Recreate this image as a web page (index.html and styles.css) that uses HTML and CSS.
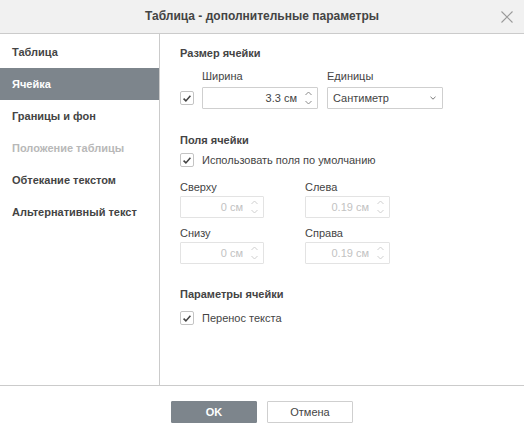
FILE: index.html
```html
<!DOCTYPE html>
<html lang="ru">
<head>
<meta charset="utf-8">
<title>Таблица - дополнительные параметры</title>
<link rel="stylesheet" href="styles.css">
</head>
<body>
<div class="dialog">
  <div class="header">
    <span></span>
    <span class="title">Таблица - дополнительные параметры</span>
    <svg class="close" width="12" height="12" viewBox="0 0 12 12"><path d="M0.5 0.5 L11.5 11.5 M11.5 0.5 L0.5 11.5" stroke="#9a9a9a" stroke-width="1.1" fill="none"/></svg>
  </div>
  <div class="main">
    <nav class="sidebar">
      <div class="nav-item">Таблица</div>
      <div class="nav-item active">Ячейка</div>
      <div class="nav-item">Границы и фон</div>
      <div class="nav-item disabled">Положение таблицы</div>
      <div class="nav-item">Обтекание текстом</div>
      <div class="nav-item">Альтернативный текст</div>
    </nav>
    <div class="content">
      <div class="section-title">Размер ячейки</div>
      <div class="size-row">
        <span class="checkbox"><svg width="13" height="13" viewBox="0 0 13 13"><path d="M2.8 6.6 L5.3 9.1 L10.2 3.6" stroke="#444" stroke-width="1.7" fill="none"/></svg></span>
        <div class="field">
          <div class="label">Ширина</div>
          <div class="spin wide">
            <span class="value">3.3 см</span>
            <span class="arrows">
              <svg width="7" height="5" viewBox="0 0 7 5"><path d="M0.5 4 L3.5 1 L6.5 4" stroke="#8a8a8a" stroke-width="1" fill="none"/></svg>
              <svg width="7" height="5" viewBox="0 0 7 5"><path d="M0.5 1 L3.5 4 L6.5 1" stroke="#8a8a8a" stroke-width="1" fill="none"/></svg>
            </span>
          </div>
        </div>
        <div class="field">
          <div class="label">Единицы</div>
          <div class="select">
            <span>Сантиметр</span>
            <svg width="6" height="4" viewBox="0 0 6 4"><path d="M0.5 0.8 L3 3.2 L5.5 0.8" stroke="#777" stroke-width="1" fill="none"/></svg>
          </div>
        </div>
      </div>

      <div class="section-title gap-lg">Поля ячейки</div>
      <div class="check-row first">
        <span class="checkbox"><svg width="13" height="13" viewBox="0 0 13 13"><path d="M2.8 6.6 L5.3 9.1 L10.2 3.6" stroke="#444" stroke-width="1.7" fill="none"/></svg></span>
        <span>Использовать поля по умолчанию</span>
      </div>
      <div class="margins">
        <div class="field">
          <div class="label">Сверху</div>
          <div class="spin disabled">
            <span class="value">0 см</span>
            <span class="arrows">
              <svg width="7" height="5" viewBox="0 0 7 5"><path d="M0.5 4 L3.5 1 L6.5 4" stroke="#cfcfcf" stroke-width="1" fill="none"/></svg>
              <svg width="7" height="5" viewBox="0 0 7 5"><path d="M0.5 1 L3.5 4 L6.5 1" stroke="#cfcfcf" stroke-width="1" fill="none"/></svg>
            </span>
          </div>
        </div>
        <div class="field">
          <div class="label">Слева</div>
          <div class="spin disabled">
            <span class="value">0.19 см</span>
            <span class="arrows">
              <svg width="7" height="5" viewBox="0 0 7 5"><path d="M0.5 4 L3.5 1 L6.5 4" stroke="#cfcfcf" stroke-width="1" fill="none"/></svg>
              <svg width="7" height="5" viewBox="0 0 7 5"><path d="M0.5 1 L3.5 4 L6.5 1" stroke="#cfcfcf" stroke-width="1" fill="none"/></svg>
            </span>
          </div>
        </div>
        <div class="field">
          <div class="label">Снизу</div>
          <div class="spin disabled">
            <span class="value">0 см</span>
            <span class="arrows">
              <svg width="7" height="5" viewBox="0 0 7 5"><path d="M0.5 4 L3.5 1 L6.5 4" stroke="#cfcfcf" stroke-width="1" fill="none"/></svg>
              <svg width="7" height="5" viewBox="0 0 7 5"><path d="M0.5 1 L3.5 4 L6.5 1" stroke="#cfcfcf" stroke-width="1" fill="none"/></svg>
            </span>
          </div>
        </div>
        <div class="field">
          <div class="label">Справа</div>
          <div class="spin disabled">
            <span class="value">0.19 см</span>
            <span class="arrows">
              <svg width="7" height="5" viewBox="0 0 7 5"><path d="M0.5 4 L3.5 1 L6.5 4" stroke="#cfcfcf" stroke-width="1" fill="none"/></svg>
              <svg width="7" height="5" viewBox="0 0 7 5"><path d="M0.5 1 L3.5 4 L6.5 1" stroke="#cfcfcf" stroke-width="1" fill="none"/></svg>
            </span>
          </div>
        </div>
      </div>

      <div class="section-title gap-xl">Параметры ячейки</div>
      <div class="check-row second">
        <span class="checkbox"><svg width="13" height="13" viewBox="0 0 13 13"><path d="M2.8 6.6 L5.3 9.1 L10.2 3.6" stroke="#444" stroke-width="1.7" fill="none"/></svg></span>
        <span>Перенос текста</span>
      </div>
    </div>
  </div>
  <div class="footer">
    <button class="btn primary">OK</button>
    <button class="btn">Отмена</button>
  </div>
</div>
</body>
</html>
```

FILE: styles.css
```css
* { box-sizing: border-box; }

html, body {
  margin: 0;
  padding: 0;
  background: #ffffff;
}

body {
  font-family: "Liberation Sans", Arial, sans-serif;
  font-size: 11px;
  color: #444444;
}

.dialog {
  width: 524px;
  height: 432px;
  display: flex;
  flex-direction: column;
  background: #ffffff;
}

.header {
  height: 34px;
  flex: none;
  background: #f1f1f1;
  border-bottom: 1px solid #cbcbcb;
  display: grid;
  grid-template-columns: 1fr auto 1fr;
  align-items: center;
}

.title {
  font-size: 12px;
  font-weight: bold;
  color: #444444;
  line-height: 33px;
}

.close {
  justify-self: end;
  margin-right: 11px;
  margin-top: 0px;
}

.main {
  height: 352px;
  flex: none;
  display: flex;
  border-bottom: 1px solid #cbcbcb;
}

.sidebar {
  width: 160px;
  flex: none;
  border-right: 1px solid #cbcbcb;
  padding-top: 2px;
}

.nav-item {
  height: 32px;
  line-height: 32px;
  padding-left: 12px;
  font-weight: bold;
  color: #444444;
  white-space: nowrap;
}

.nav-item.active {
  background: #7d858c;
  color: #ffffff;
}

.nav-item.disabled {
  color: #b8b8b8;
}

.content {
  flex: 1;
  padding: 12px 20px 0 20px;
}

.section-title {
  font-weight: bold;
  line-height: 14px;
}

.section-title.gap-lg { margin-top: 24px; }
.section-title.gap-xl { margin-top: 23px; }

.size-row {
  margin-top: 9px;
  display: flex;
  align-items: flex-end;
}

.size-row .checkbox {
  margin-right: 8px;
  margin-bottom: 4px;
}

.size-row .field + .field {
  margin-left: 9px;
}

.label {
  line-height: 14px;
  margin-bottom: 2px;
  white-space: nowrap;
}

.size-row .label {
  margin-bottom: 4px;
}

.checkbox {
  width: 14px;
  height: 14px;
  flex: none;
  border: 1px solid #c4c4c4;
  border-radius: 2px;
  background: #ffffff;
  display: inline-flex;
  align-items: center;
  justify-content: center;
}

.checkbox svg { display: block; }

.spin {
  width: 84px;
  height: 22px;
  border: 1px solid #cfcfcf;
  border-radius: 1px;
  display: flex;
  align-items: center;
  justify-content: flex-end;
  padding-right: 5px;
  background: #ffffff;
}

.spin.wide {
  width: 116px;
}

.spin .value {
  margin-right: 8px;
  white-space: nowrap;
}

.spin.disabled {
  border-color: #e3e3e3;
  color: #c2c2c2;
}

.arrows {
  display: flex;
  flex-direction: column;
  gap: 4px;
}

.arrows svg { display: block; }

.select {
  width: 116px;
  height: 22px;
  border: 1px solid #cfcfcf;
  border-radius: 1px;
  display: flex;
  align-items: center;
  justify-content: space-between;
  padding: 0 6px 0 5px;
  background: #ffffff;
}

.select svg { display: block; }

.check-row {
  display: flex;
  align-items: center;
  height: 14px;
  line-height: 14px;
}

.check-row .checkbox {
  margin-right: 8px;
}

.check-row.first { margin-top: 6px; }
.check-row.second { margin-top: 10px; }

.margins {
  margin-top: 13px;
  display: grid;
  grid-template-columns: 84px 85px;
  column-gap: 41px;
  row-gap: 8px;
}

.margins .spin { width: 84px; }
.margins .field:nth-child(even) .spin { width: 85px; }

.footer {
  flex: 1;
  display: flex;
  justify-content: center;
  align-items: flex-start;
  padding-top: 15px;
  gap: 10px;
}

.btn {
  width: 86px;
  height: 22px;
  border: 1px solid #cfcfcf;
  border-radius: 1px;
  background: #ffffff;
  font-family: "Liberation Sans", Arial, sans-serif;
  font-size: 11px;
  color: #444444;
  padding: 0;
}

.btn.primary {
  background: #7d858c;
  border-color: #7d858c;
  color: #ffffff;
  font-weight: bold;
}
```
